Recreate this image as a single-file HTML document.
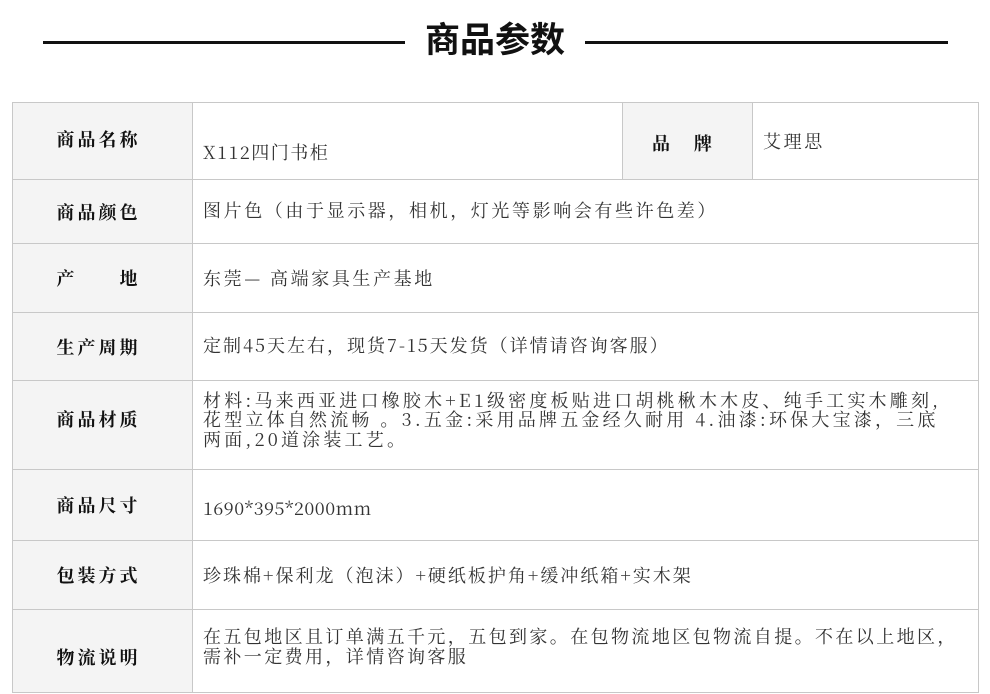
<!DOCTYPE html>
<html><head><meta charset="utf-8"><style>
body{margin:0;width:990px;height:694px;background:#fff;overflow:hidden;position:relative;font-family:"Noto Serif CJK SC","Liberation Serif",serif;color:#222}
.line{position:absolute;top:41px;height:3px;background:#111}
.title{position:absolute;left:405px;width:180px;top:16px;text-align:center;font-family:"Liberation Sans","Noto Sans CJK SC",sans-serif;font-size:35px;font-weight:bold;color:#111;line-height:50px}
table{position:absolute;left:12px;top:102px;border-collapse:collapse;width:967px;table-layout:fixed}
td{border:1.5px solid #c8c8c8;font-size:18px;padding:0 10px;line-height:20px;letter-spacing:2.6px;vertical-align:middle;white-space:nowrap}
td.l{background:#f4f4f4;text-align:center;font-weight:bold;color:#111;font-size:18px;letter-spacing:3px;padding:0 12px 0 4px}
td.v{color:#333}
</style></head><body>
<div class="line" style="left:43px;width:362px"></div>
<div class="line" style="left:585px;width:363px"></div>
<div class="title">商品参数</div>
<table>
<col style="width:180px"><col style="width:430px"><col style="width:130px"><col>
<tr style="height:77px"><td class="l" style="padding-bottom:4px">商品名称</td><td class="v" style="padding-top:22px;letter-spacing:1.5px">X112四门书柜</td><td class="l" style="padding-top:4px">品　牌</td><td class="v">艾理思</td></tr>
<tr style="height:64px"><td class="l">商品颜色</td><td class="v" colspan="3" style="padding-bottom:4px">图片色（由于显示器，相机，灯光等影响会有些许色差）</td></tr>
<tr style="height:69px"><td class="l">产　　地</td><td class="v" colspan="3">东莞— 高端家具生产基地</td></tr>
<tr style="height:68px"><td class="l">生产周期</td><td class="v" colspan="3" style="padding-bottom:4px;letter-spacing:2px">定制45天左右，现货7-15天发货（详情请咨询客服）</td></tr>
<tr style="height:89px"><td class="l" style="padding-bottom:12px">商品材质</td><td class="v" colspan="3" style="line-height:19.5px;padding-bottom:10px;letter-spacing:3.2px">材料:马来西亚进口橡胶木+E1级密度板贴进口胡桃楸木木皮、纯手工实木雕刻,<br>花型立体自然流畅 。3.五金:采用品牌五金经久耐用 4.油漆:环保大宝漆，三底<br>两面,20道涂装工艺。</td></tr>
<tr style="height:71px"><td class="l">商品尺寸</td><td class="v" colspan="3" style="padding-top:6px;letter-spacing:0.5px">1690*395*2000mm</td></tr>
<tr style="height:69px"><td class="l">包装方式</td><td class="v" colspan="3" style="letter-spacing:2px">珍珠棉+保利龙（泡沫）+硬纸板护角+缓冲纸箱+实木架</td></tr>
<tr style="height:83px"><td class="l" style="padding-top:12px">物流说明</td><td class="v" colspan="3" style="padding-bottom:10px;letter-spacing:2.4px">在五包地区且订单满五千元，五包到家。在包物流地区包物流自提。不在以上地区，<br>需补一定费用，详情咨询客服</td></tr>
</table>
</body></html>
